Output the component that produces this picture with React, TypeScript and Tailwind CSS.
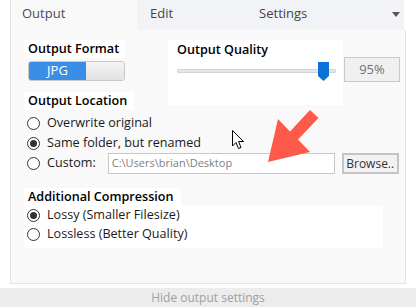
import React from "react";

function Radio({ checked }: { checked?: boolean }) {
  return (
    <span className="flex h-[13px] w-[13px] shrink-0 items-center justify-center rounded-full border border-[#333] bg-white">
      {checked && <span className="h-[7px] w-[7px] rounded-full bg-[#333]" />}
    </span>
  );
}

function RadioRow({ label, checked, h }: { label: string; checked?: boolean; h: string }) {
  return (
    <div className={`flex items-center gap-[7px] pl-[3px] ${h}`}>
      <Radio checked={checked} />
      <span className="text-[12.6px] text-[#1a1a1a]">{label}</span>
    </div>
  );
}

export default function App() {
  return (
    <div
      className="relative flex h-[307px] w-[416px] flex-col overflow-hidden bg-white"
      style={{ fontFamily: '"Open Sans", "Noto Sans", sans-serif' }}
    >
      {/* tabs */}
      <div className="ml-[10px] flex h-[30px] w-[394px] shrink-0">
        <div className="flex w-[127px] items-center border-l border-[#e3e3e3] bg-[#f9f9f9] pb-[2px] pl-[11px] text-[13px] text-[#4a4a58]">
          Output
        </div>
        <div className="relative flex flex-1 items-center bg-[#f2f3f7] pb-[2px] text-[13px] text-[#444]">
          <span className="ml-[13px]">Edit</span>
          <span className="ml-[86px]">Settings</span>
          <svg className="absolute left-[255px] top-[12px]" width="8" height="5" viewBox="0 0 8 5">
            <polygon points="0,0 8,0 4,5" fill="#555" />
          </svg>
        </div>
      </div>

      {/* panel */}
      <div className="mx-[10px] h-[254px] shrink-0 border border-t-0 border-[#e3e3e3] bg-[#f9f9f9] pl-[13px] pt-[10px]">
        <div className="flex items-start">
          <div className="flex w-[144px] flex-col">
            <div className="flex h-[18px] w-[101px] items-center bg-white pl-[4px] text-[12.6px] font-semibold text-black">
              Output Format
            </div>
            <div className="ml-[4px] mt-[3px] flex h-[20px] w-[97px] overflow-hidden rounded-[3px] border border-[#c8c8c8]">
              <div className="flex w-[57px] items-center justify-center bg-[#3a8ee8] text-[13px] text-white">JPG</div>
              <div className="flex-1 bg-gradient-to-b from-[#f4f4f4] to-[#e2e2e2]" />
            </div>
            <div className="mt-[11px] flex h-[18px] w-[110px] items-center bg-white pl-[4px] text-[12.6px] font-semibold text-black">
              Output Location
            </div>
          </div>
          <div className="flex h-[65px] w-[175px] flex-col bg-white pl-[9px]">
            <div className="mt-[1px] flex h-[18px] items-center text-[12.6px] font-semibold text-black">Output Quality</div>
            <div className="relative mt-[10px] h-[4px] w-[159px] rounded-[1px] border border-[#d4d4d4] bg-[#e6e6e6]">
              <svg className="absolute left-[140px] top-[-8px]" width="11" height="19" viewBox="0 0 11 19">
                <polygon points="0,0 11,0 11,14 5.5,19 0,14" fill="#0a72d8" />
              </svg>
            </div>
          </div>
          <div className="ml-[1px] mt-[17px] flex h-[25px] w-[56px] items-center justify-center border border-[#c8c8c8] bg-[#f0f0f0] text-[13px] text-[#707070]">
            95%
          </div>
        </div>

        <div className="mt-[3px] flex flex-col">
          <RadioRow label="Overwrite original" h="h-[20px]" />
          <RadioRow label="Same folder, but renamed" checked h="h-[20px]" />
          <div className="flex h-[21px] items-center">
            <div className="flex items-center gap-[7px] pl-[3px]">
              <Radio />
              <span className="text-[12.6px] text-[#1a1a1a]">Custom:</span>
            </div>
            <div className="ml-[12px] flex h-[21px] w-[227px] items-center border border-[#c8c8c8] bg-white pl-[3px] text-[11px] text-[#808080]">
              C:\Users\brian\Desktop
            </div>
            <div className="ml-[7px] flex h-[21px] w-[57px] items-center justify-center border-2 border-[#c4c4c4] bg-[#f2f2f2] text-[12px] text-[#333]">
              Browse..
            </div>
          </div>
        </div>

        <div className="mt-[14px] flex h-[18px] w-[157px] items-center bg-white pl-[4px] text-[12.6px] font-semibold text-black">
          Additional Compression
        </div>
        <div className="flex h-[42px] w-[359px] flex-col bg-white">
          <RadioRow label="Lossy (Smaller Filesize)" checked h="h-[19px]" />
          <RadioRow label="Lossless (Better Quality)" h="h-[19px]" />
        </div>
      </div>

      {/* bottom bar */}
      <div className="mt-[4px] flex h-[19px] shrink-0 items-center justify-center bg-[#ececec] text-[12px] text-[#a0a0a0]">
        Hide output settings
      </div>

      {/* annotation arrow */}
      <svg className="absolute left-0 top-0" width="416" height="307" viewBox="0 0 416 307">
        <polygon
          points="310,110 318.5,118 298,139.5 310,152 268,162 278,119 290,131.5"
          fill="#fe5a4b"
        />
      </svg>
      {/* mouse cursor */}
      <svg className="absolute left-[232px] top-[130px]" width="13" height="20" viewBox="0 0 13 20">
        <path
          d="M0.5,0.5 L0.5,16 L4,12.5 L6.5,18.5 L9,17.5 L6.5,11.5 L11.5,11.5 Z"
          fill="#fff"
          stroke="#000"
          strokeWidth="1"
          strokeLinejoin="miter"
        />
      </svg>
    </div>
  );
}
